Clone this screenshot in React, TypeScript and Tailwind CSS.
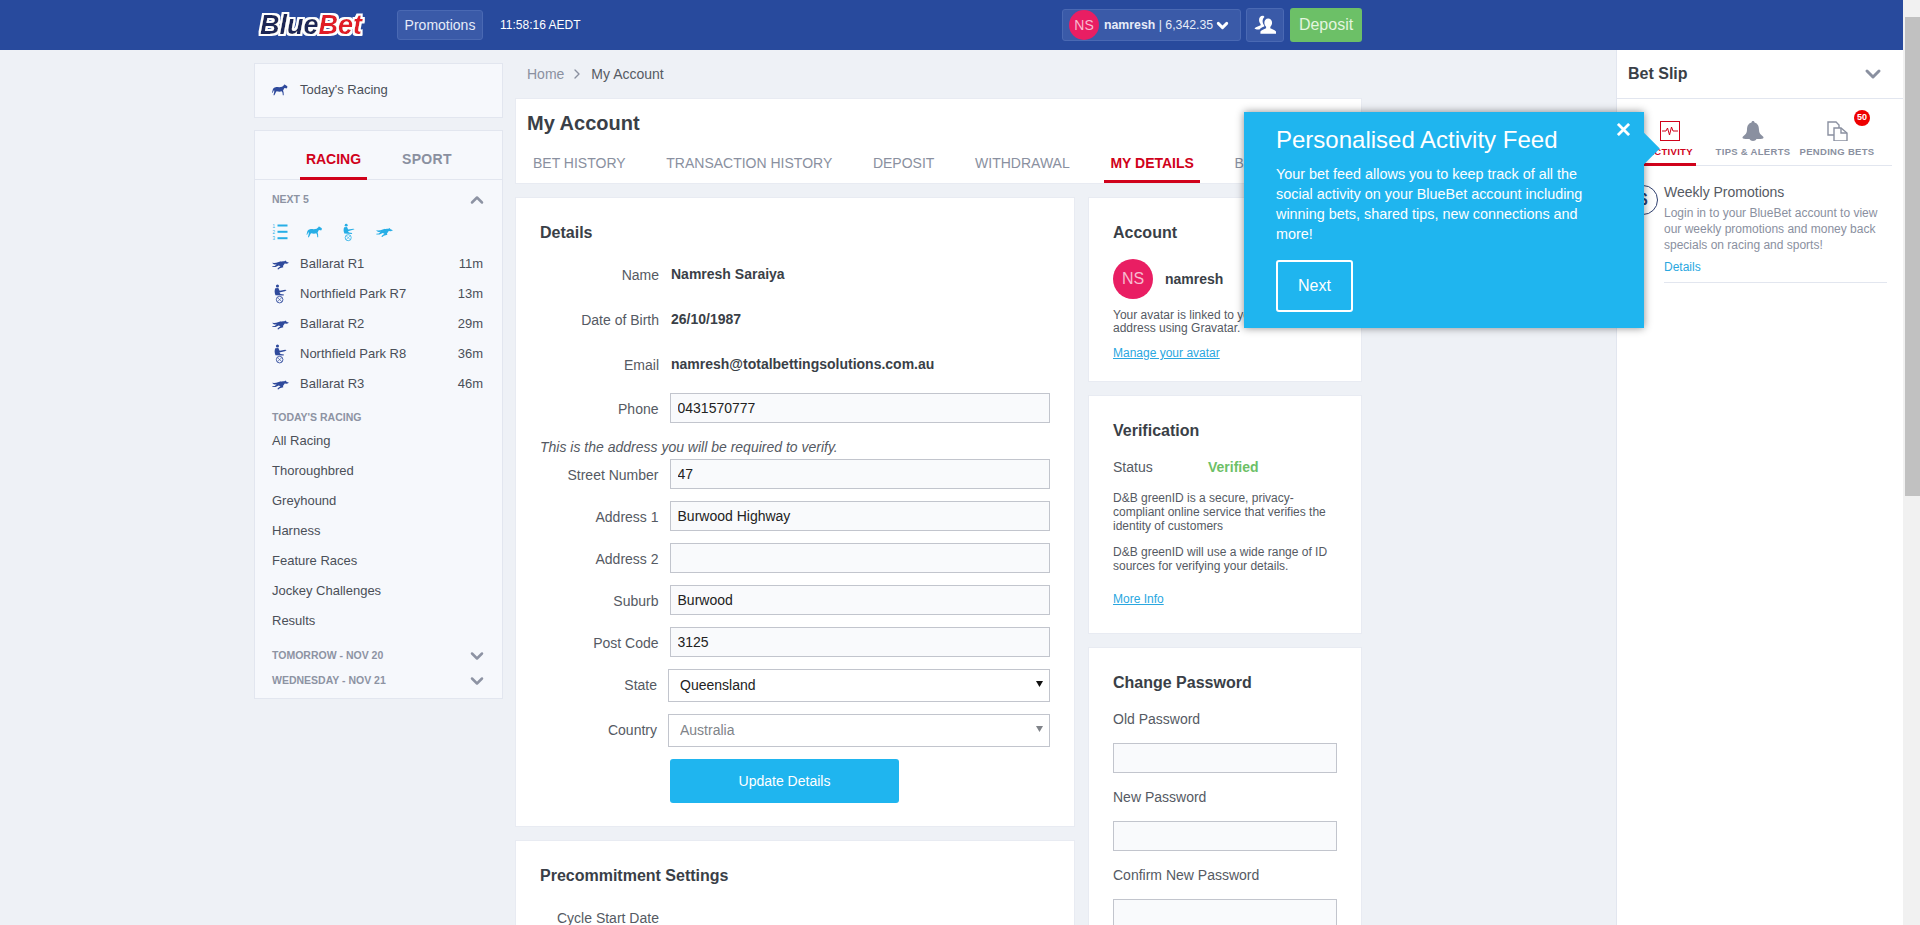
import { ChevronDown, ChevronRight, ChevronUp } from "lucide-react";

const next5 = [
  { name: "Ballarat R1", time: "11m", kind: "dog" },
  { name: "Northfield Park R7", time: "13m", kind: "harness" },
  { name: "Ballarat R2", time: "29m", kind: "dog" },
  { name: "Northfield Park R8", time: "36m", kind: "harness" },
  { name: "Ballarat R3", time: "46m", kind: "dog" },
];

const racingLinks = ["All Racing", "Thoroughbred", "Greyhound", "Harness", "Feature Races", "Jockey Challenges", "Results"];

const accountTabs = ["BET HISTORY", "TRANSACTION HISTORY", "DEPOSIT", "WITHDRAWAL", "MY DETAILS", "BANK DETAILS"];

const addressRows = [
  { label: "Street Number", value: "47" },
  { label: "Address 1", value: "Burwood Highway" },
  { label: "Address 2", value: "" },
  { label: "Suburb", value: "Burwood" },
  { label: "Post Code", value: "3125" },
];

function HorseIcon({ className }: { className: string }) {
  return (
    <svg viewBox="0 0 24 18" className={className} fill="currentColor">
      <path d="M23 3.5 19.5 1l-1-.8-.3 1.3-3 2.6c-3 1.200-6.500.4-9.700.6C3.400 4.800 1.600 6 1.200 8.400L0 13l1 .3 1.600-3.400.6-.8.2 2.400L2.200 17h1.400l2.400-5 1-1.200c2.600.9 5.400.9 7.600.2l1.200 2.200.4 3.800h1.400l-.2-4.400-.8-2.800 2-3.700 2.400.2.8.6 1-1.200z" />
    </svg>
  );
}

function DogIcon({ className }: { className: string }) {
  return (
    <svg viewBox="0 0 24 15" className={className} fill="currentColor">
      <path d="M24 5 20.500 3.500 19 2l-1.500 1C15 3.200 12 3 9.500 4 7 5 5 5.500 3 5.500L0 5l2.500 2c1.500.5 3 .5 4 .3L4 9.500l-3.500.5v1H5l4.500-2.200L12 10l-3 2-1.500 2 1.500.5 2-1.700 5-1.300-.5-2L18 6l3 .5z" />
    </svg>
  );
}

function HarnessIcon({ className }: { className: string }) {
  return (
    <svg viewBox="0 0 15 22" className={className} fill="currentColor">
      <circle cx="4" cy="1.800" r="1.800" />
      <path d="M1.500 4.500 5 4l1.500 3.200 6.500-1 1.500.6-2 .9-6.300 1.700L7.500 11l4 .5-.4 1.300-9.400-.5C.4 9.500.5 6.500 1.500 4.500z" />
      <circle cx="6.500" cy="17.500" r="3.800" fill="none" stroke="currentColor" strokeWidth="1" />
      <path d="M3.800 15l5.400 5M9.200 15l-5.400 5" stroke="currentColor" strokeWidth=".7" />
    </svg>
  );
}

function RaceIcon({ kind }: { kind: string }) {
  if (kind === "harness") {
    return <HarnessIcon className="ml-[2px] h-[20px] w-[13px] text-[#2f4a9c]" />;
  }
  return <DogIcon className="h-[11px] w-[17px] text-[#2f4a9c]" />;
}

function ListIcon() {
  return (
    <svg viewBox="0 0 16 16" className="h-[16px] w-[16px] text-[#27aee6]" fill="currentColor">
      <rect x="5.500" y="0.500" width="10" height="2" />
      <rect x="5.500" y="6.800" width="10" height="2" />
      <rect x="5.500" y="13.200" width="10" height="2" />
      <text x="0.500" y="4" fontSize="4.500" fontFamily="Liberation Sans">1</text>
      <text x="0.500" y="10" fontSize="4.500" fontFamily="Liberation Sans">2</text>
      <text x="0.500" y="16" fontSize="4.500" fontFamily="Liberation Sans">3</text>
    </svg>
  );
}

function FriendsIcon() {
  return (
    <svg viewBox="0 0 24 22" className="h-[22px] w-[22px] text-white" fill="currentColor">
      <path d="M9.500 1C7 1 5.500 3 5.500 5.500c0 1.800.8 3.300 1.700 4.300v1.500C5 12.500 1.500 13 .5 15c1.700.7 3.500 1 5.500 1 1-2 3-2.800 5.200-3.500v-1c-1.100-1.200-1.800-3-1.800-4.800 0-1.900.8-3.500 2-4.500C11 1.600 10.300 1 9.500 1z" />
      <path d="M15.500 4C13 4 11.300 6 11.300 8.500c0 1.900.8 3.500 1.900 4.500v1.500c-2.400 1.200-5 1.700-6.200 3.500v2.500h17V18c-1.200-1.800-3.800-2.300-6.200-3.500V13c1.100-1 1.900-2.600 1.900-4.500C19.700 6 18 4 15.500 4z" />
    </svg>
  );
}

// the filter fattens the letters and puts a white outline round them
function Logo() {
  return (
    <svg viewBox="0 0 112 30" className="h-[30px] w-[112px]" fontFamily="Liberation Sans" fontWeight="bold" fontStyle="italic" fontSize="27">
      <defs>
        <filter id="logo-outline" x="-5%" y="-20%" width="110%" height="140%">
          <feMorphology in="SourceGraphic" operator="dilate" radius="0.45" result="fat" />
          <feMorphology in="SourceAlpha" operator="dilate" radius="2" result="wide" />
          <feFlood floodColor="white" />
          <feComposite in2="wide" operator="in" result="outline" />
          <feMerge>
            <feMergeNode in="outline" />
            <feMergeNode in="fat" />
          </feMerge>
        </filter>
      </defs>
      <text x="4" y="24" filter="url(#logo-outline)">
        <tspan fill="#1a2555">Blue</tspan>
        <tspan fill="#e01f26">Bet</tspan>
      </text>
    </svg>
  );
}

function Field({ label, value }: { label: string; value: string }) {
  return (
    <div className="mb-[12px] flex h-[30px] items-center">
      <div className="mr-[11px] w-[119px] pt-[2px] text-right text-[14px] text-[#555a63]">{label}</div>
      <input
        defaultValue={value}
        className="h-[30px] w-[382px] border border-[#c2c5cd] bg-[#f9fafc] px-[7px] text-[14px] text-[#222] outline-none"
      />
    </div>
  );
}

function InfoRow({ label, value, className }: { label: string; value: string; className: string }) {
  return (
    <div className={`flex h-[30px] items-center ${className}`}>
      <div className="mr-[12px] w-[119px] pt-[2px] text-right text-[14px] text-[#555a63]">{label}</div>
      <div className="text-[14px] font-bold text-[#3a3f47]">{value}</div>
    </div>
  );
}

function SelectRow({ label, value, disabled }: { label: string; value: string; disabled?: boolean }) {
  return (
    <div className="mb-[12px] flex h-[33px] items-center">
      <div className="mr-[11px] w-[119px] text-right text-[14px] text-[#555a63]">{label}</div>
      <div className="relative">
        <select
          defaultValue={value}
          disabled={disabled}
          className={`block h-[33px] w-[382px] appearance-none border border-[#c2c5cd] bg-white pl-[11px] text-[14px] outline-none ${disabled ? "text-[#808389]" : "text-[#222]"}`}
        >
          <option>{value}</option>
        </select>
        <svg viewBox="0 0 7 6" className={`absolute top-[12px] right-[7px] h-[6px] w-[7px] ${disabled ? "text-[#808389]" : "text-[#111]"}`} fill="currentColor">
          <path d="M0 0h7L3.500 6z" />
        </svg>
      </div>
    </div>
  );
}

function Header() {
  return (
    <div className="h-[50px] shrink-0 bg-[#284a9d]">
      <div className="ml-[254px] flex h-full w-[1108px] items-center">
        <div className="ml-[2px] w-[112px]">
          <Logo />
        </div>
        <button className="ml-[29px] h-[30px] w-[86px] rounded-[3px] border border-[#4a69b3] bg-[#3a5aa8] text-[14px] text-[#e6ecf8]">
          Promotions
        </button>
        <div className="ml-[17px] text-[12px] text-white">11:58:16 AEDT</div>
        <div className="ml-auto flex h-[32px] w-[179px] items-center rounded-[3px] border border-[#4a69b3] bg-[#3a5aa8]">
          <div className="ml-[6px] flex h-[30px] w-[30px] items-center justify-center rounded-full bg-[#e91e63] text-[14px] text-[#f8bbd0]">
            NS
          </div>
          <div className="ml-[5px] text-[12.300px] text-[#e6ecf8]">
            <span className="font-bold">namresh</span> | 6,342.35
          </div>
          <ChevronDown size={17} strokeWidth={4} className="ml-[1px] text-white" />
        </div>
        <button className="ml-[5px] flex h-[34px] w-[38px] items-center justify-center rounded-[3px] border border-[#4a69b3] bg-[#3a5aa8]">
          <FriendsIcon />
        </button>
        <button className="ml-[6px] h-[34px] w-[72px] rounded-[3px] bg-[#6cc067] text-[16px] text-[#e3f5df]">Deposit</button>
      </div>
    </div>
  );
}

function LeftColumn() {
  return (
    <div className="w-[249px] shrink-0 pt-[13px]">
      <div className="flex h-[55px] items-center border border-[#e2e6ef] bg-[#f6f8fc] pb-[2px] pl-[17px]">
        <HorseIcon className="h-[12px] w-[16px] text-[#2f4a9c]" />
        <span className="ml-[12px] text-[13px] text-[#4a4f58]">Today's Racing</span>
      </div>
      <div className="mt-[12px] h-[569px] border border-[#e2e6ef] bg-[#f6f8fc]">
        <div className="flex h-[49px] border-b border-[#e2e6ef] text-[14px] font-bold">
          <div className="ml-[45px] flex h-[49px] w-[67px] items-center justify-center border-b-[3px] border-[#d0021b] pt-[11px] text-[#d0021b]">
            RACING
          </div>
          <div className="ml-[35px] flex h-[49px] items-center pt-[8px] tracking-[0.3px] text-[#8a90a0]">SPORT</div>
        </div>
        <div className="flex h-[39px] items-center justify-between pr-[15px] pl-[17px] text-[10.500px] font-bold text-[#8d93a3]">
          NEXT 5
          <ChevronUp size={20} strokeWidth={3} />
        </div>
        <div className="mt-[2px] flex h-[22px] items-center pl-[17px] text-[#27aee6]">
          <ListIcon />
          <HorseIcon className="ml-[18px] h-[12px] w-[17px]" />
          <HarnessIcon className="ml-[20px] h-[19px] w-[12px]" />
          <DogIcon className="ml-[21px] h-[12px] w-[17px]" />
        </div>
        <div className="mt-[6px]">
          {next5.map((race) => (
            <div key={race.name} className="flex h-[30px] items-center pr-[19px] pl-[17px] text-[13px] text-[#4a4f58]">
              <div className="flex w-[28px] items-center">
                <RaceIcon kind={race.kind} />
              </div>
              <span>{race.name}</span>
              <span className="ml-auto">{race.time}</span>
            </div>
          ))}
        </div>
        <div className="mt-[10px] flex h-[18px] items-center pl-[17px] text-[10.500px] font-bold text-[#8d93a3]">TODAY'S RACING</div>
        <div className="mt-[-1px]">
          {racingLinks.map((link) => (
            <div key={link} className="flex h-[30px] items-center pl-[17px] text-[13px] text-[#4a4f58]">
              {link}
            </div>
          ))}
        </div>
        <div className="mt-[7px] flex h-[25px] items-center justify-between pr-[15px] pl-[17px] text-[10.500px] font-bold text-[#8d93a3]">
          TOMORROW - NOV 20
          <ChevronDown size={20} strokeWidth={3} />
        </div>
        <div className="flex h-[25px] items-center justify-between pr-[15px] pl-[17px] text-[10.500px] font-bold text-[#8d93a3]">
          WEDNESDAY - NOV 21
          <ChevronDown size={20} strokeWidth={3} />
        </div>
      </div>
    </div>
  );
}

function DetailsCard() {
  return (
    <div className="w-[560px] border border-[#e8ebf2] bg-white px-[24px] pt-[24px] pb-[23px]">
      <div className="h-[22px] text-[16px] leading-[22px] font-bold text-[#3a3f47]">Details</div>
      <InfoRow label="Name" value="Namresh Saraiya" className="mt-[15px] mb-[15px]" />
      <InfoRow label="Date of Birth" value="26/10/1987" className="mb-[15px]" />
      <InfoRow label="Email" value="namresh@totalbettingsolutions.com.au" className="mb-[14px]" />
      <div className="flex h-[30px] items-center">
        <div className="mr-[11px] w-[119px] pt-[2px] text-right text-[14px] text-[#555a63]">Phone</div>
        <input
          defaultValue="0431570777"
          className="h-[30px] w-[382px] border border-[#c2c5cd] bg-[#f9fafc] px-[7px] text-[14px] text-[#222] outline-none"
        />
      </div>
      <div className="mt-[14px] mb-[2px] h-[20px] text-[14px] leading-[20px] text-[#555a63] italic">
        This is the address you will be required to verify.
      </div>
      {addressRows.map((row) => (
        <Field key={row.label} label={row.label} value={row.value} />
      ))}
      <SelectRow label="State" value="Queensland" />
      <SelectRow label="Country" value="Australia" disabled />
      <button className="ml-[130px] h-[44px] w-[229px] rounded-[3px] bg-[#1fb5ef] text-[14px] text-white">Update Details</button>
    </div>
  );
}

function AccountColumn() {
  return (
    <div className="w-[274px] space-y-[13px]">
      <div className="h-[185px] border border-[#e8ebf2] bg-white px-[24px] pt-[24px]">
        <div className="h-[22px] text-[16px] leading-[22px] font-bold text-[#3a3f47]">Account</div>
        <div className="mt-[15px] flex h-[40px] items-center">
          <div className="flex h-[40px] w-[40px] items-center justify-center rounded-full bg-[#e91e63] text-[16px] text-[#f8bbd0]">NS</div>
          <div className="ml-[12px] text-[14px] font-bold text-[#3a3f47]">namresh</div>
        </div>
        <p className="mt-[10px] w-[224px] text-[12px] leading-[13px] text-[#555a63]">
          Your avatar is linked to your email address using Gravatar.
        </p>
        <a className="mt-[9px] block text-[12px] text-[#2aa7df] underline">Manage your avatar</a>
      </div>
      <div className="h-[239px] border border-[#e8ebf2] bg-white px-[24px] pt-[24px]">
        <div className="h-[22px] text-[16px] leading-[22px] font-bold text-[#3a3f47]">Verification</div>
        <div className="mt-[17px] flex h-[16px] items-center text-[14px] text-[#555a63]">
          <span className="w-[95px]">Status</span>
          <span className="font-bold text-[#6cc067]">Verified</span>
        </div>
        <p className="mt-[16px] text-[12px] leading-[14px] text-[#555a63]">
          D&amp;B greenID is a secure, privacy-compliant online service that verifies the identity of customers
        </p>
        <p className="mt-[12px] text-[12px] leading-[14px] text-[#555a63]">
          D&amp;B greenID will use a wide range of ID sources for verifying your details.
        </p>
        <a className="mt-[17px] block text-[12px] text-[#2aa7df] underline">More Info</a>
      </div>
      <div className="border border-[#e8ebf2] bg-white px-[24px] pt-[24px] pb-[24px]">
        <div className="h-[23px] text-[16px] leading-[22px] font-bold text-[#3a3f47]">Change Password</div>
        {["Old Password", "New Password", "Confirm New Password"].map((label) => (
          <div key={label}>
            <div className="mt-[16px] h-[16px] text-[14px] leading-[16px] text-[#555a63]">{label}</div>
            <input className="mt-[16px] h-[30px] w-[224px] border border-[#c2c5cd] bg-[#f9fafc] outline-none" />
          </div>
        ))}
      </div>
    </div>
  );
}

function MainColumn() {
  return (
    <div className="ml-[12px] w-[847px] shrink-0">
      <div className="flex h-[48px] items-center pl-[12px] text-[14px]">
        <span className="text-[#8a90a0]">Home</span>
        <ChevronRight size={16} className="mr-[6px] ml-[5px] text-[#8a90a0]" />
        <span className="text-[#555a63]">My Account</span>
      </div>
      <div className="h-[86px] border border-[#e8ebf2] bg-white pl-[11px]">
        <div className="h-[49px] pt-[10px] text-[20px] leading-[28px] font-bold text-[#3a3f47]">My Account</div>
        <div className="flex gap-[28.700px] text-[14px]">
          {accountTabs.map((tab) => (
            <div
              key={tab}
              className={
                tab === "MY DETAILS"
                  ? "flex h-[35px] items-center border-b-[3px] border-[#d0021b] px-[6px] pb-[1px] font-bold text-[#d0021b]"
                  : "flex h-[35px] items-center px-[6px] pb-[4px] text-[#8a90a0]"
              }
            >
              {tab}
            </div>
          ))}
        </div>
      </div>
      <div className="mt-[13px] flex gap-[13px]">
        <div className="space-y-[13px]">
          <DetailsCard />
          <div className="w-[560px] border border-[#e8ebf2] bg-white px-[24px] pt-[24px] pb-[24px]">
            <div className="h-[22px] text-[16px] leading-[22px] font-bold text-[#3a3f47]">Precommitment Settings</div>
            <div className="mt-[21px] ml-[17px] text-[14px] text-[#555a63]">Cycle Start Date</div>
          </div>
        </div>
        <AccountColumn />
      </div>
    </div>
  );
}

function BetSlip() {
  return (
    <div className="ml-auto w-[287px] shrink-0 border-l border-[#e2e6ef] bg-white">
      <div className="flex h-[49px] items-center justify-between border-b border-[#e2e6ef] pr-[18px] pl-[11px]">
        <span className="text-[16px] font-bold text-[#3a3f47]">Bet Slip</span>
        <ChevronDown size={24} strokeWidth={3} className="text-[#8a90a0]" />
      </div>
      <div className="mr-[11px] flex h-[67px] border-b border-[#e2e6ef] text-[9.500px] font-bold tracking-[0.3px] whitespace-nowrap text-[#8a90a0]">
        <div className="ml-[27px] flex h-[67px] w-[52px] flex-col items-center border-b-[3px] border-[#d0021b] pt-[22px] text-[#d0021b]">
          <svg viewBox="0 0 20 20" className="h-[20px] w-[20px]" fill="none" stroke="currentColor">
            <rect x="0.500" y="0.500" width="19" height="19" />
            <path d="M2 10h4l1.500-3 2 7 2-8 1.500 4h5" />
          </svg>
          <span className="mt-[4px]">ACTIVITY</span>
        </div>
        <div className="ml-[15px] flex w-[84px] flex-col items-center pt-[22px]">
          <svg viewBox="0 0 22 20" className="h-[20px] w-[22px]" fill="currentColor">
            <path d="M11 0c1 0 1.500.7 1.500 1.500C16 2.500 17 5.500 17 9c0 3 1.500 4.500 4 6.500 1 1 .5 2-1 2.200-2 .3-4 .3-5.500.3-.5 1.200-2 2-3.500 2S8 19.200 7.500 18C6 18 4 18 2 17.700c-1.500-.2-2-1.200-1-2.200C3.500 13.500 5 12 5 9c0-3.500 1-6.500 4.500-7.500C9.500.7 10 0 11 0z" />
          </svg>
          <span className="mt-[4px]">TIPS &amp; ALERTS</span>
        </div>
        <div className="relative flex w-[84px] flex-col items-center pt-[22px]">
          <svg viewBox="0 0 21 20" className="h-[20px] w-[21px]" fill="none" stroke="currentColor" strokeWidth="1.400">
            <path d="M7 14H1V1h8l3 3v3" />
            <path d="M7 7h7l6 5v8H7z" />
            <path d="M14 7v5h6" />
          </svg>
          <span className="mt-[4px]">PENDING BETS</span>
          <div className="absolute top-[11px] left-[59px] flex h-[16px] w-[16px] items-center justify-center rounded-full bg-[#e00] text-[9px] tracking-normal text-white">
            50
          </div>
        </div>
      </div>
      <div className="flex pt-[19px] pl-[11px]">
        <div className="flex h-[30px] w-[30px] shrink-0 items-center justify-center rounded-full border border-[#2f3f6e] text-[16px] font-bold text-[#2f3f6e]">
          $
        </div>
        <div className="ml-[6px] w-[223px] border-b border-[#e2e6ef] pb-[7px]">
          <div className="mt-[-1px] text-[14px] leading-[16px] text-[#555a63]">Weekly Promotions</div>
          <p className="mt-[5px] text-[12px] leading-[16px] text-[#8a90a0]">
            Login in to your BlueBet account to view our weekly promotions and money back specials on racing and sports!
          </p>
          <div className="mt-[6px] text-[12px] leading-[16px] text-[#2aa7df]">Details</div>
        </div>
      </div>
    </div>
  );
}

function FeedPopup() {
  return (
    <div className="absolute top-[112px] left-[1244px] z-10 h-[216px] w-[400px] bg-[#1fb5ef] pt-[14px] pl-[32px] text-white shadow-[0_0_8px_rgba(0,0,0,0.45)]">
      <div className="absolute top-[25px] right-[-11px] h-[23px] w-[23px] rotate-45 bg-[#1fb5ef]" />
      <svg viewBox="0 0 14 14" className="absolute top-[11px] right-[14px] h-[13px] w-[13px]" stroke="white" strokeWidth="3">
        <path d="M1 1l12 12M13 1 1 13" />
      </svg>
      <div className="relative text-[24px] leading-[28px]">Personalised Activity Feed</div>
      <p className="relative mt-[10px] w-[330px] text-[14.400px] leading-[20px]">
        Your bet feed allows you to keep track of all the social activity on your BlueBet account including winning bets, shared tips, new connections and more!
      </p>
      <button className="mt-[16px] h-[52px] w-[77px] rounded-[3px] border-2 border-white text-[16px]">Next</button>
    </div>
  );
}

export default function App() {
  return (
    <div className="relative flex h-[925px] w-[1920px] overflow-hidden bg-[#eef1f6] font-['Liberation_Sans',Arial,sans-serif]">
      <div className="flex w-[1903px] flex-col">
        <Header />
        <div className="flex min-h-0 flex-1 pl-[254px]">
          <LeftColumn />
          <MainColumn />
          <BetSlip />
        </div>
      </div>
      <FeedPopup />
      {/* page scrollbar */}
      <div className="w-[17px] bg-[#f1f1f1] pt-[17px] pl-[2px]">
        <div className="h-[479px] bg-[#c1c1c1]" />
      </div>
    </div>
  );
}
